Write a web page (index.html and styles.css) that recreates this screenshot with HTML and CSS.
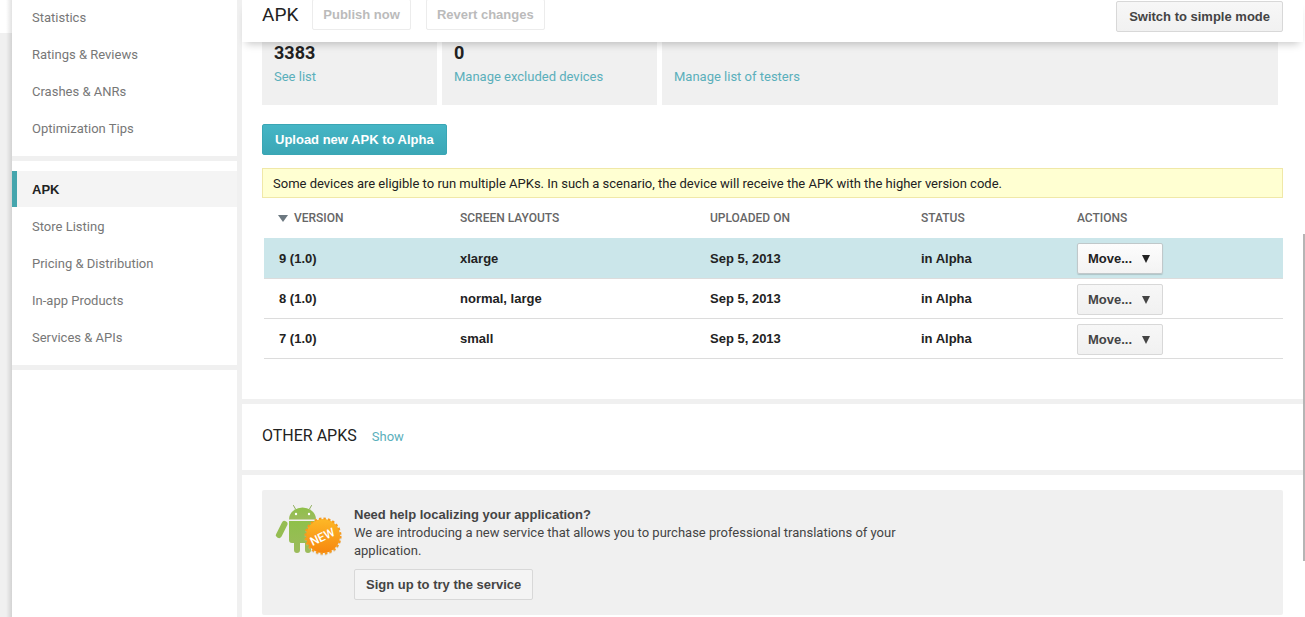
FILE: index.html
```html
<!DOCTYPE html>
<html lang="en">
<head>
<meta charset="utf-8">
<title>APK</title>
<link rel="stylesheet" href="styles.css">
</head>
<body>
<div class="page">
  <div class="gutter"><div class="gutter-top"></div></div>
  <nav class="sidebar">
    <div class="nav-group nav-group-first">
      <a class="nav-item" href="#">Statistics</a>
      <a class="nav-item" href="#">Ratings &amp; Reviews</a>
      <a class="nav-item" href="#">Crashes &amp; ANRs</a>
      <a class="nav-item" href="#">Optimization Tips</a>
    </div>
    <div class="nav-group">
      <a class="nav-item nav-item-active" href="#">APK</a>
      <a class="nav-item" href="#">Store Listing</a>
      <a class="nav-item" href="#">Pricing &amp; Distribution</a>
      <a class="nav-item" href="#">In-app Products</a>
      <a class="nav-item" href="#">Services &amp; APIs</a>
    </div>
    <div class="nav-fill"></div>
  </nav>
  <main class="main">
    <header class="header">
      <h1 class="title">APK</h1>
      <div class="header-actions">
        <button class="btn btn-disabled" type="button" disabled>Publish now</button>
        <button class="btn btn-disabled" type="button" disabled>Revert changes</button>
      </div>
      <button class="btn btn-mode" type="button">Switch to simple mode</button>
    </header>
    <section class="panel panel-alpha">
      <div class="stats">
        <div class="stat"><div class="stat-value">3383</div><a class="link" href="#">See list</a></div>
        <div class="stat"><div class="stat-value">0</div><a class="link" href="#">Manage excluded devices</a></div>
        <div class="stat"><div class="stat-value"></div><a class="link" href="#">Manage list of testers</a></div>
      </div>
      <button class="btn btn-primary" type="button">Upload new APK to Alpha</button>
      <p class="notice">Some devices are eligible to run multiple APKs. In such a scenario, the device will receive the APK with the higher version code.</p>
      <table class="apks">
        <thead>
          <tr>
            <th class="col-version"><svg class="sort" width="10" height="7" viewBox="0 0 10 7" aria-hidden="true"><path d="M0 0h10L5 7z" fill="#6c7880"/></svg>VERSION</th>
            <th class="col-layouts">SCREEN LAYOUTS</th>
            <th class="col-date">UPLOADED ON</th>
            <th class="col-status">STATUS</th>
            <th>ACTIONS</th>
          </tr>
        </thead>
        <tbody>
          <tr class="row-active">
            <td>9 (1.0)</td><td>xlarge</td><td>Sep 5, 2013</td><td>in Alpha</td>
            <td class="cell-action"><button class="btn btn-move" type="button">Move...<svg width="8" height="8" viewBox="0 0 8 8" aria-hidden="true"><path d="M0 0h8L4 8z" fill="currentColor"/></svg></button></td>
          </tr>
          <tr>
            <td>8 (1.0)</td><td>normal, large</td><td>Sep 5, 2013</td><td>in Alpha</td>
            <td class="cell-action"><button class="btn btn-move" type="button">Move...<svg width="8" height="8" viewBox="0 0 8 8" aria-hidden="true"><path d="M0 0h8L4 8z" fill="currentColor"/></svg></button></td>
          </tr>
          <tr>
            <td>7 (1.0)</td><td>small</td><td>Sep 5, 2013</td><td>in Alpha</td>
            <td class="cell-action"><button class="btn btn-move" type="button">Move...<svg width="8" height="8" viewBox="0 0 8 8" aria-hidden="true"><path d="M0 0h8L4 8z" fill="currentColor"/></svg></button></td>
          </tr>
        </tbody>
      </table>
    </section>
    <section class="panel panel-other">
      <h2 class="subtitle">OTHER APKS</h2>
      <a class="link" href="#">Show</a>
    </section>
    <section class="panel panel-promo">
      <div class="promo">
        <svg class="promo-icon" width="68" height="54" viewBox="0 0 68 54" role="img" aria-label="New">
          <defs>
            <linearGradient id="sun" x1="0" y1="0" x2="0" y2="1"><stop offset="0" stop-color="#fdb827"/><stop offset="1" stop-color="#f7870f"/></linearGradient>
            <linearGradient id="robot" x1="0" y1="0" x2="0" y2="1"><stop offset="0" stop-color="#8fc04a"/><stop offset="1" stop-color="#9cbb5c"/></linearGradient>
          </defs>
          <g fill="url(#robot)">
            <path d="M14 14.500a13.500 12 0 0 1 27 0z"/>
            <path d="M14 16h27v19a3 3 0 0 1-3 3h-2v7a3 3 0 0 1-6 0v-7h-5v7a3 3 0 0 1-6 0v-7h-2a3 3 0 0 1-3-3z"/>
          </g>
          <path d="M20.500 4l-2-3.500M34.500 4l2-3.500" stroke="#8fae5c" stroke-width="1" stroke-linecap="round"/>
          <path d="M9.500 19L4 30" stroke="#95bd52" stroke-width="6" stroke-linecap="round"/>
          <circle cx="21" cy="9" r="1.200" fill="#fff"/><circle cx="34" cy="9" r="1.200" fill="#fff"/>
          <circle cx="48" cy="32" r="17" fill="none" stroke="#c9b79a" stroke-opacity=".5" stroke-width="3" stroke-dasharray="2.450 2"/>
          <circle cx="48" cy="31" r="17" fill="url(#sun)"/>
          <circle cx="48" cy="31" r="17.500" fill="none" stroke="#f79a1c" stroke-width="2" stroke-dasharray="2.400 2.180"/>
          <text class="promo-badge" x="47" y="36" text-anchor="middle" transform="rotate(-25 47 31)">NEW</text>
        </svg>
        <div class="promo-body">
          <h3 class="promo-title">Need help localizing your application?</h3>
          <p class="promo-text">We are introducing a new service that allows you to purchase professional translations of your application.</p>
          <button class="btn btn-signup" type="button">Sign up to try the service</button>
        </div>
      </div>
    </section>
  </main>
</div>
<div class="scroll-thumb"></div>
</body>
</html>
```
FILE: styles.css
```css
* { box-sizing: border-box; }
html, body { height: 100%; }
body {
  margin: 0;
  overflow: hidden;
  background: #fff;
  color: #222;
  font: 13px/18px Roboto, "Liberation Sans", sans-serif;
}
h1, h2, h3, p { margin: 0; font-weight: 400; }
a { text-decoration: none; }
.page {
  display: grid;
  grid-template-columns: 12px 225px minmax(0, 1fr);
  min-height: 100%;
  padding-right: 2px;
}
.gutter { background: linear-gradient(to right, transparent 50%, rgba(0, 0, 0, .12)), #f0f0f0; }
.gutter-top { height: 33px; background: linear-gradient(to right, #fff 50%, #e2e2e2); }
.sidebar {
  display: flex;
  flex-direction: column;
  gap: 5px;
  background: #f0f0f0;
}
.nav-group {
  display: flex;
  flex-direction: column;
  gap: 1px;
  padding: 10px 0;
  background: #fff;
}
.nav-group-first { margin-top: -1px; padding-top: 0; }
.nav-fill { flex: 1; background: #fff; }
.nav-item { padding: 10px 20px 8px; color: #777; }
.nav-item-active {
  padding-left: 15px;
  border-left: 5px solid #45a5ad;
  background: #f4f4f4;
  color: #222;
  font-family: "Liberation Sans", Arial, sans-serif;
  font-weight: 700;
}
.main {
  display: flex;
  flex-direction: column;
  gap: 5px;
  padding-left: 5px;
  background: #f0f0f0;
}
.header {
  position: relative;
  z-index: 1;
  display: flex;
  align-items: flex-start;
  height: 42px;
  margin-bottom: -5px;
  padding: 0 20px;
  background: #fff;
  box-shadow: 0 6px 8px -4px rgba(0, 0, 0, .22);
}
.title { padding-top: 4px; font-size: 19px; line-height: 22px; }
.header-actions { display: flex; gap: 15px; margin: -1px 0 0 14px; }
.btn {
  height: 31px;
  padding: 0 10px;
  border: 1px solid #d8d8d8;
  border-radius: 2px;
  background: linear-gradient(#f7f7f7, #f1f1f1);
  color: #444;
  font: 700 13px/18px "Liberation Sans", Arial, sans-serif;
}
.btn-disabled { border-color: #ececec; background: #fff; color: #bbb; }
.btn-mode { margin: 1px 0 0 auto; padding: 0 12px; }
.btn-primary {
  margin-top: 19px;
  padding: 0 12px;
  border-color: #3aa6b4;
  background: linear-gradient(#45b5c5, #3ba7b6);
  color: #fff;
}
.panel { background: #fff; }
.panel-alpha { padding: 0 20px 40px; }
.stats { display: grid; grid-template-columns: 175px 215px 1fr; gap: 5px; margin-right: 5px; }
.stat { height: 63px; padding: 0 12px; background: #f0f0f0; }
.stat-value { height: 26px; font-size: 18px; line-height: 22px; font-weight: 700; }
.link { color: #5aafbb; }
.notice {
  margin-top: 13px;
  padding: 6px 10px 4px;
  border: 1px solid #f0e8a8;
  background: #ffffd2;
}
.apks {
  width: calc(100% - 2px);
  margin-left: 2px;
  border-collapse: collapse;
  table-layout: fixed;
  text-align: left;
}
.apks th {
  height: 40px;
  padding: 0 15px;
  color: #666;
  font-size: 12px;
  font-weight: 500;
  white-space: nowrap;
}
.apks td {
  height: 40px;
  padding: 2px 15px 0;
  border-bottom: 1px solid #dcdcdc;
  font-family: "Liberation Sans", Arial, sans-serif;
  font-weight: 700;
}
.row-active td { background: #cbe6ea; }
.col-version { width: 181px; }
.col-layouts { width: 250px; }
.col-date { width: 211px; }
.col-status { width: 156px; }
.sort { margin: 0 6px 0 -1px; }
.btn-move { display: flex; align-items: center; gap: 10px; padding: 1px 12px 0 10px; }
.row-active .btn-move {
  border-color: #c0c8ca;
  background: linear-gradient(#fdfdfd, #f3f3f3);
  box-shadow: 0 1px 1px rgba(0, 0, 0, .15);
  color: #222;
}
.panel-other { display: flex; align-items: center; gap: 15px; height: 66px; padding: 0 20px; }
.subtitle { padding-bottom: 2px; font-size: 16px; line-height: 22px; }
.panel-promo { flex: 1; padding: 15px 20px 2px; }
.promo { display: flex; gap: 11px; padding: 15px 14px; border-radius: 2px; background: #f0f0f0; }
.promo-icon { flex: none; margin-left: -1px; }
.promo-badge { fill: #fff; font: 500 12px Roboto, sans-serif; }
.promo-body { max-width: 560px; color: #444; }
.promo-title { padding-top: 1px; font: 700 13px/18px "Liberation Sans", Arial, sans-serif; }
.btn-signup { margin-top: 9px; padding: 1px 11px 0; background: #f4f4f4; }
.scroll-thumb {
  position: fixed;
  right: 0;
  top: 38%;
  width: 2px;
  height: 53%;
  background: #b5b5b5;
}
```
